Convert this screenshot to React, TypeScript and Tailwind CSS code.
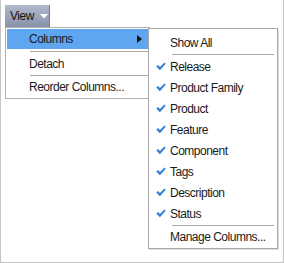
import { ReactNode } from 'react'

const columns = ['Release', 'Product Family', 'Product', 'Feature', 'Component', 'Tags', 'Description', 'Status']

function Check() {
    return (
        <svg width="10" height="9" viewBox="0 0 10 9" className="shrink-0" aria-hidden="true">
            <path d="M0.3 4.5 L2.2 2.9 L3.9 5 L8.5 0.4 L9.7 1.7 L3.9 8.2 Z" fill="#2f7fd2" />
        </svg>
    )
}

function Separator({ className = '' }: { className?: string }) {
    return <div className={`h-px bg-[#a9a9a9] ${className}`} />
}

function SubItem({ children, checked }: { children: ReactNode; checked?: boolean }) {
    return (
        <div className="h-[21px] flex items-center">
            <div className="w-[21px] pl-[7px] flex items-center">{checked && <Check />}</div>
            <span>{children}</span>
        </div>
    )
}

export default function App() {
    return (
        <div
            className="relative w-[284px] h-[263px] bg-white border-l border-r border-b border-[#c4c4c4] text-[12px] tracking-[-0.5px] text-[#1a1a1a] overflow-hidden"
            style={{ fontFamily: '"Liberation Sans", Arial, sans-serif' }}
        >
            {/* View menu button */}
            <div className="pt-[5px] pl-[4px]">
                <div className="w-[45px] h-[22px] flex items-center gap-[6px] pl-[5px] bg-gradient-to-b from-[#b3bacb] to-[#8791a9] border-r border-[#6f7a93]">
                    <span className="text-[#111]">View</span>
                    <svg width="8" height="5" viewBox="0 0 8 5" aria-hidden="true">
                        <path d="M0 0 H8 L4 4.5 Z" fill="#ffffff" />
                    </svg>
                </div>
            </div>

            {/* Main dropdown */}
            <div className="absolute left-[4px] top-[27px] w-[145px] bg-white border border-[#b0b0b0] p-px pb-0">
                <div className="h-[20px] flex items-center justify-between pl-[22px] pr-[6px] bg-[#5ea6f0]">
                    <span>Columns</span>
                    <svg width="5" height="8" viewBox="0 0 5 8" aria-hidden="true">
                        <path d="M0 0 L5 4 L0 8 Z" fill="#111" />
                    </svg>
                </div>
                <Separator className="ml-[23px] mt-[2px]" />
                <div className="h-[23px] flex items-center pl-[22px]">Detach</div>
                <Separator className="ml-[23px]" />
                <div className="h-[22px] flex items-center pl-[22px]">Reorder Columns...</div>
            </div>

            {/* Columns submenu */}
            <div className="absolute left-[147px] top-[28px] w-[130px] bg-white border border-[#a8a8a8] shadow-[1px_1px_0_#dcdcdc] pt-[3px]">
                <SubItem>Show All</SubItem>
                <Separator className="ml-[23px] mr-[3px] my-[1px]" />
                {columns.map(c => (
                    <SubItem key={c} checked>{c}</SubItem>
                ))}
                <Separator className="ml-[23px] mr-[3px] mt-[1px]" />
                <div className="h-[22px] flex items-center pl-[21px]">Manage Columns...</div>
            </div>
        </div>
    )
}
